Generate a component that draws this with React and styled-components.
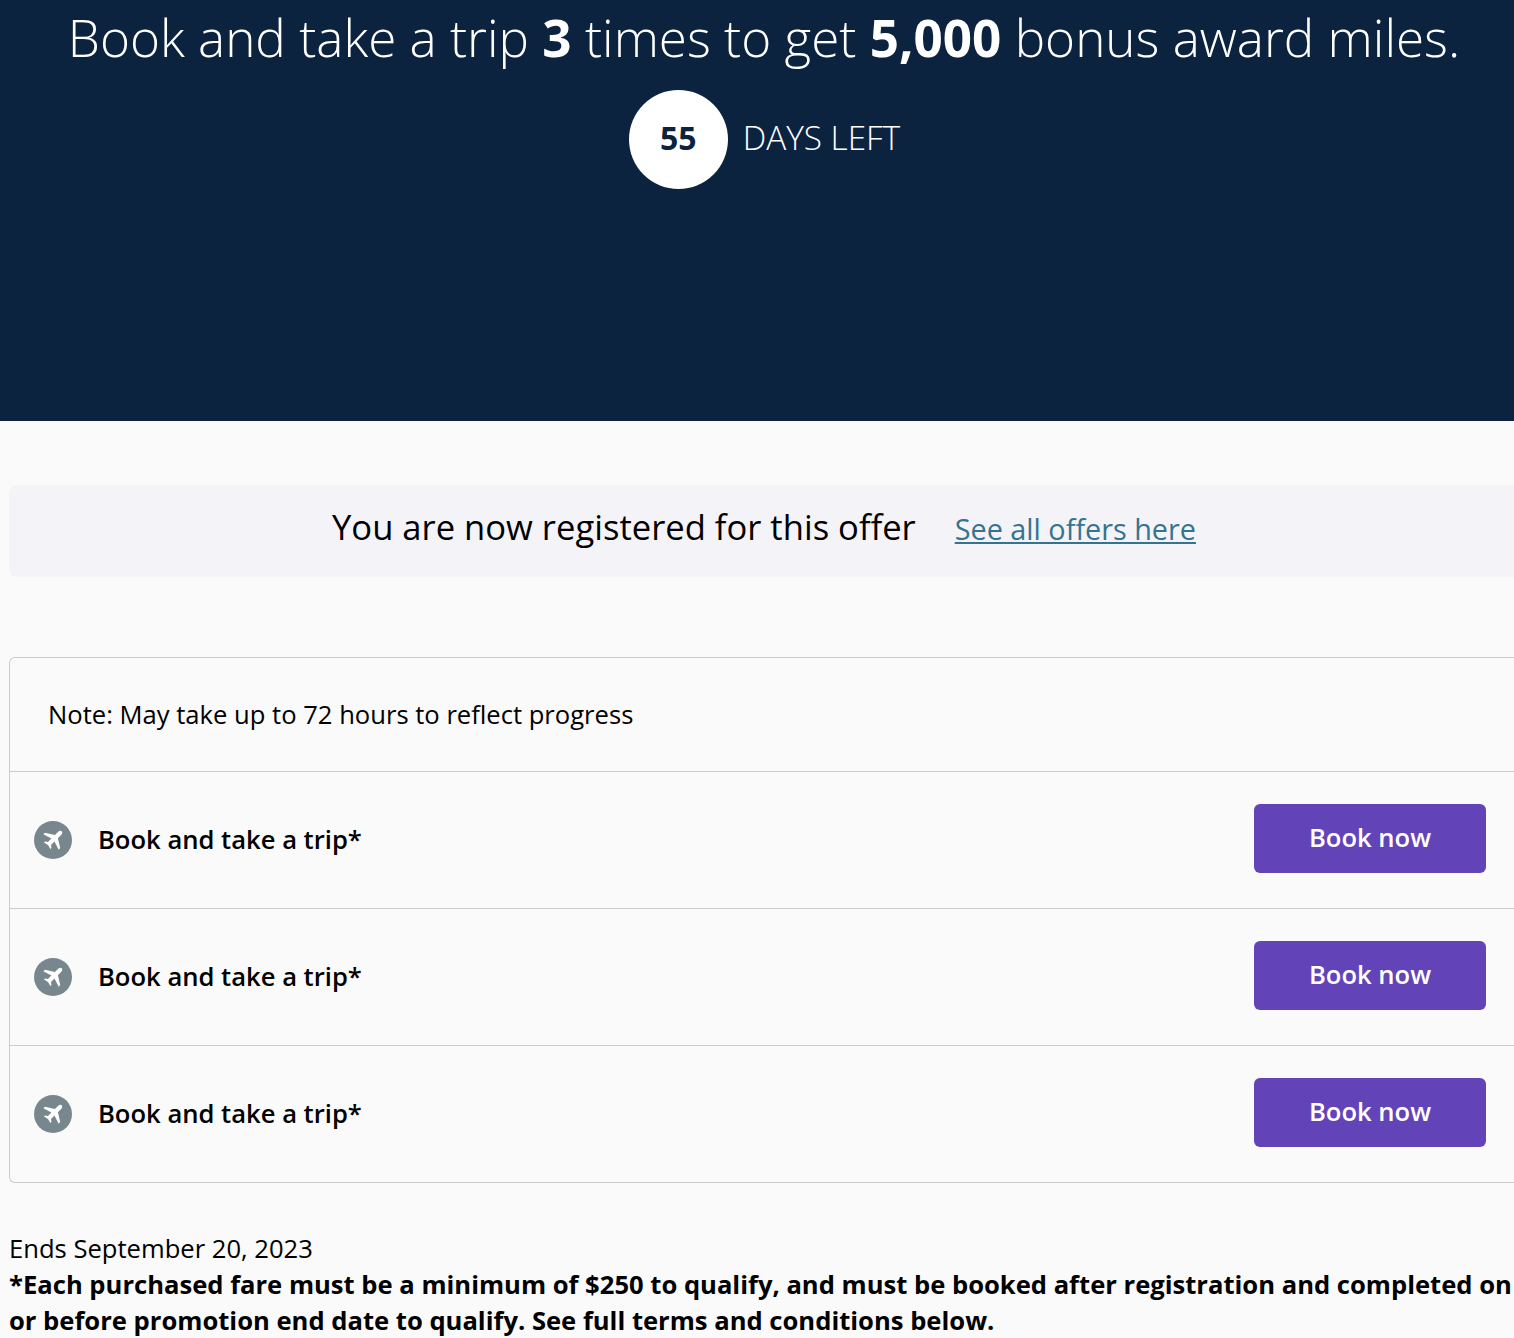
import React from 'react'
import styled, { createGlobalStyle } from 'styled-components'

const GlobalStyle = createGlobalStyle`
  html, body {
    margin: 0;
    padding: 0;
    background: #fafafa;
    font-family: "Open Sans", "Liberation Sans", sans-serif;
    color: #000;
    overflow-x: hidden;
  }
`

const Page = styled.div`
  width: 1528px;
  height: 1338px;
  overflow: hidden;
`

const Hero = styled.header`
  background: #0c2340;
  height: 421px;
  color: #fff;
  text-align: center;
  overflow: hidden;
`

const Headline = styled.h1`
  margin: 0;
  padding-top: 2px;
  font-size: 51.2px;
  line-height: 71px;
  font-weight: 300;
  white-space: nowrap;

  b {
    font-weight: 700;
  }
`

const Countdown = styled.div`
  display: flex;
  align-items: center;
  justify-content: center;
  gap: 15px;
  margin-top: 17px;
  padding-left: 1px;
`

const DayCircle = styled.div`
  width: 99px;
  height: 99px;
  border-radius: 50%;
  background: #fff;
  color: #0c2340;
  font-size: 32px;
  font-weight: 700;
  padding-bottom: 4px;
  box-sizing: border-box;
  display: flex;
  align-items: center;
  justify-content: center;
`

const DaysLabel = styled.span`
  font-size: 33.3px;
  font-weight: 300;
  padding-bottom: 5px;
`

const Content = styled.main`
  padding: 64px 0 0 9px;
`

const Banner = styled.div`
  background: #f3f3f8;
  border-radius: 8px;
  height: 92px;
  box-sizing: border-box;
  padding: 0 9px 8px 0;
  display: flex;
  align-items: center;
  justify-content: center;
  gap: 39px;
`

const BannerText = styled.span`
  font-size: 34.6px;
  padding-bottom: 2px;
`

const BannerLink = styled.a`
  font-size: 28.8px;
  color: #35748f;
  text-decoration: underline;
  padding-top: 3px;
`

const Card = styled.section`
  margin-top: 80px;
  border: 1px solid #ccc;
  border-right: 0;
  border-radius: 6px 0 0 6px;
`

const Note = styled.div`
  height: 113px;
  padding-left: 38px;
  box-sizing: border-box;
  display: flex;
  align-items: center;
  font-size: 25.6px;
`

const Row = styled.div`
  height: 137px;
  border-top: 1px solid #ccc;
  display: flex;
  align-items: center;
  padding: 0 42px 0 24px;
  box-sizing: border-box;
`

const IconCircle = styled.span`
  width: 38px;
  height: 38px;
  border-radius: 50%;
  background: #78868e;
  display: flex;
  align-items: center;
  justify-content: center;
  flex: none;

  svg {
    width: 26px;
    height: 26px;
    fill: #fff;
  }
`

const RowTitle = styled.span`
  margin-left: 26px;
  padding-bottom: 1px;
  font-size: 25.6px;
  font-weight: 600;
  flex: 1;
`

const BookButton = styled.button`
  width: 232px;
  height: 69px;
  margin-bottom: 3px;
  padding: 0 0 3px;
  border: 0;
  border-radius: 6px;
  background: #6244b8;
  color: #fff;
  font-family: inherit;
  font-size: 25.6px;
  font-weight: 600;
`

const Footer = styled.footer`
  margin-top: 48px;
  font-size: 25.6px;
  line-height: 36px;
`

const Terms = styled.div`
  font-weight: 700;
  width: 1505px;
`

const PlaneIcon = () => (
  <svg viewBox="0 0 24 24">
    <g transform="translate(1 -1) rotate(45 12 12)">
      <path d="M12 2c1.2 0 2 1.2 2 2.6V9l8 5v2l-8-2.5V18l2.2 1.6V21L12 20l-4.2 1v-1.4L10 18v-4.5L2 16v-2l8-5V4.6C10 3.2 10.800 2 12 2z" />
    </g>
  </svg>
)

const rows = [1, 2, 3]

export default function App() {
  return (
    <Page>
      <GlobalStyle />
      <Hero>
        <Headline>
          Book and take a trip <b>3</b> times to get <b>5,000</b> bonus award miles.
        </Headline>
        <Countdown>
          <DayCircle>55</DayCircle>
          <DaysLabel>DAYS LEFT</DaysLabel>
        </Countdown>
      </Hero>
      <Content>
        <Banner>
          <BannerText>You are now registered for this offer</BannerText>
          <BannerLink href="#">See all offers here</BannerLink>
        </Banner>
        <Card>
          <Note>Note: May take up to 72 hours to reflect progress</Note>
          {rows.map((id) => (
            <Row key={id}>
              <IconCircle><PlaneIcon /></IconCircle>
              <RowTitle>Book and take a trip*</RowTitle>
              <BookButton>Book now</BookButton>
            </Row>
          ))}
        </Card>
        <Footer>
          <div>Ends September 20, 2023</div>
          <Terms>
            *Each purchased fare must be a minimum of $250 to qualify, and must be booked after registration and completed on or before promotion end date to qualify. See full terms and conditions below.
          </Terms>
        </Footer>
      </Content>
    </Page>
  )
}
